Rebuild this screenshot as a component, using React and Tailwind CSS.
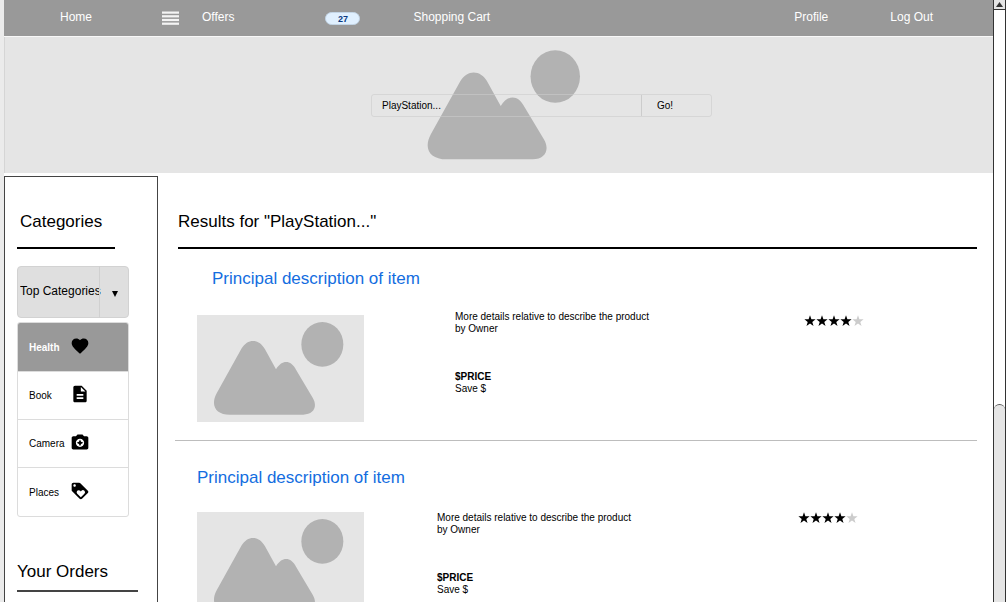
import React from "react";
import {
  MdFavorite,
  MdDescription,
  MdCameraEnhance,
  MdLoyalty,
} from "react-icons/md";

const categories = [
  { name: "Health", Icon: MdFavorite, active: true },
  { name: "Book", Icon: MdDescription },
  { name: "Camera", Icon: MdCameraEnhance },
  { name: "Places", Icon: MdLoyalty },
];

const results = [
  {
    id: 1,
    title: "pt-[18px] pl-[37px]",
    body: "mt-5",
    image: "mt-1",
    details: "ml-[91px]",
    stars: "mt-1 mr-[113px]",
    article: "border-b border-[#bdbdbd] pb-[18px]",
  },
  {
    id: 2,
    title: "pt-[25px] pl-[22px]",
    body: "mt-[22px]",
    image: "",
    details: "ml-[73px]",
    stars: "mr-[119px]",
    article: "pb-[18px]",
  },
];

function Placeholder({ className }) {
  return (
    <svg viewBox="0 0 501 321" className={className} fill="#b2b2b2" aria-hidden="true">
      <path d="M134 100C152 70 186 70 204 103L237 163C254 135 281 132 298 166L347 248C363 275 350 299 319 299H99C55 299 40 270 59 235Z" />
      <ellipse cx="376" cy="88" rx="63" ry="67" />
    </svg>
  );
}

function Stars({ className }) {
  return (
    <div className={`flex shrink-0 ${className}`} role="img" aria-label="4 of 5 stars">
      {[1, 2, 3, 4, 5].map((n) => (
        <svg key={n} viewBox="0 0 12 12" className="size-3" fill={n <= 4 ? "#000" : "#ccc"}>
          <path d="M6 0.3L7.4 4.3H11.6L8.3 6.9L9.5 11.1L6 8.6L2.5 11.1L3.7 6.9L0.4 4.3H4.6Z" />
        </svg>
      ))}
    </div>
  );
}

function NavBar() {
  return (
    <nav className="flex h-[37px] items-center border-b border-[#f8f8f8] bg-[#999] pr-[60px] pb-[2px] pl-[56px] text-xs text-white">
      <a href="#home">Home</a>
      <button type="button" aria-label="Menu" className="mt-px ml-[70px]">
        <svg viewBox="0 0 17 14" className="h-[14px] w-[17px]" fill="#f4f4f4">
          <rect y="0.5" width="17" height="2.2" />
          <rect y="4.2" width="17" height="2.2" />
          <rect y="7.9" width="17" height="2.2" />
          <rect y="11.6" width="17" height="2.2" />
        </svg>
      </button>
      <a href="#offers" className="ml-[23px]">Offers</a>
      <span className="mt-[3px] ml-[91px] flex h-[13px] w-[35px] items-center justify-center rounded-full border border-[#c3d5e6] bg-[#e0f0ff] text-[9px] font-bold text-[#0a3a82]">
        27
      </span>
      <a href="#cart" className="ml-[53px]">Shopping Cart</a>
      <div className="ml-auto flex gap-[62px]">
        <a href="#profile">Profile</a>
        <a href="#logout">Log Out</a>
      </div>
    </nav>
  );
}

function Banner() {
  return (
    <header className="grid h-[136px] items-center border-l border-[#d5d5d5] bg-[#e5e5e5]">
      <Placeholder className="col-start-1 row-start-1 ml-[402px] h-[126px] w-[198px]" />
      <form className="relative col-start-1 row-start-1 ml-[366px] flex h-[23px] w-[341px] rounded-[3px] border border-[#ccc]/60 text-[10px] text-black">
        <input
          aria-label="Search"
          defaultValue="PlayStation..."
          className="min-w-0 flex-1 bg-transparent pl-[10px] outline-none"
        />
        <button type="button" className="w-[70px] border-l border-[#ccc] pl-[15px] text-left">
          Go!
        </button>
      </form>
    </header>
  );
}

function Sidebar() {
  return (
    <aside className="w-[154px] shrink-0 border border-[#444] pt-[33px] pl-3">
      <h2 className="w-[98px] border-b-2 border-black pb-[13px] pl-[3px] text-[17px] leading-6">
        Categories
      </h2>
      <div className="mt-[17px] grid h-[52px] w-28">
        <select
          aria-label="Category group"
          className="col-start-1 row-start-1 appearance-none rounded border border-[#d2d2d2] bg-[#dfdfdf] pb-[2px] pl-[2px] text-xs text-black"
        >
          <option>Top Categories</option>
        </select>
        <span className="pointer-events-none relative col-start-1 row-start-1 flex w-[30px] items-center justify-center justify-self-end border-l border-[#d0d0d0]">
          <svg viewBox="0 0 6 6" className="mt-[3px] size-[6px]">
            <path d="M0 0H6L3 6Z" />
          </svg>
        </span>
      </div>
      <ul className="mt-1 w-28 divide-y divide-[#dcdcdc] overflow-hidden rounded-[3px] border border-[#dcdcdc] text-[10px]">
        {categories.map(({ name, Icon, active }) => (
          <li key={name} className={active ? "h-[49px] bg-[#999] font-bold text-white" : "h-12"}>
            <a href={`#${name.toLowerCase()}`} className="flex h-full items-center pl-[11px]">
              <span className="w-[41px]">{name}</span>
              <Icon className="mb-[3px] size-5 text-black" />
            </a>
          </li>
        ))}
      </ul>
      <h2 className="mt-[43px] w-[121px] border-b-2 border-[#444] pb-[6px] text-[17px] leading-6">
        Your Orders
      </h2>
    </aside>
  );
}

function Result({ item }) {
  return (
    <article className={item.article}>
      <h3 className={`text-[17px] leading-6 text-[#136de0] ${item.title}`}>
        <a href={`#item-${item.id}`}>Principal description of item</a>
      </h3>
      <div className={`flex items-start pl-[22px] ${item.body}`}>
        <Placeholder className={`h-[107px] w-[167px] shrink-0 bg-[#e5e5e5] ${item.image}`} />
        <div className={`text-[10px] leading-3 ${item.details}`}>
          <p>
            More details relative to describe the product
            <br />
            by Owner
          </p>
          <p className="mt-9 font-bold">$PRICE</p>
          <p>Save $</p>
        </div>
        <Stars className={`ml-auto ${item.stars}`} />
      </div>
    </article>
  );
}

function ScrollTrack() {
  return (
    <div className="flex w-[13px] shrink-0 flex-col border-x border-[#333] bg-white">
      <button
        type="button"
        aria-label="Scroll up"
        className="flex h-[10px] items-center justify-center border-b border-[#333] bg-[#e5e5e5]"
      >
        <svg viewBox="0 0 7 5" className="h-[5px] w-[7px]" fill="#333">
          <path d="M3.5 0L7 5H0Z" />
        </svg>
      </button>
      <div className="grow-2 basis-0" />
      <div className="grow basis-0 rounded-t-full border-t border-[#555] bg-[#e5e5e5]" />
    </div>
  );
}

export default function App() {
  return (
    <div className="flex h-screen bg-white font-['Liberation_Sans',Arial,sans-serif] text-black">
      <div className="w-1 shrink-0 bg-[#ebebeb]" />
      <div className="min-w-0 flex-1 overflow-y-auto [scrollbar-width:none]">
        <NavBar />
        <Banner />
        <div className="mt-[3px] flex">
          <Sidebar />
          <main className="min-w-0 flex-1 pt-[34px] pr-4 pl-[17px]">
            <h1 className="ml-[3px] border-b-2 border-black pb-[13px] text-[17px] leading-6">
              Results for "PlayStation..."
            </h1>
            {results.map((item) => (
              <Result key={item.id} item={item} />
            ))}
          </main>
        </div>
      </div>
      <ScrollTrack />
    </div>
  );
}
